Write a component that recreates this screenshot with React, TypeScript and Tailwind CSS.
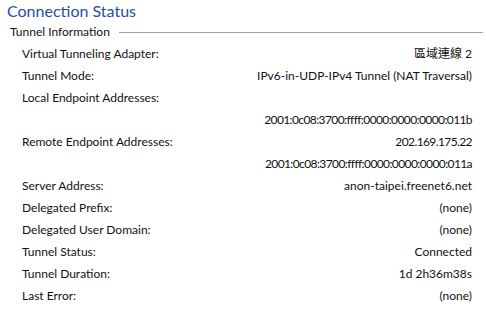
const rows: { label: string; value?: string; tight?: boolean }[] = [
  { label: 'Virtual Tunneling Adapter:', value: '區域連線 2' },
  { label: 'Tunnel Mode:', value: 'IPv6-in-UDP-IPv4 Tunnel (NAT Traversal)' },
  { label: 'Local Endpoint Addresses:' },
  { label: '', value: '2001:0c08:3700:ffff:0000:0000:0000:011b', tight: true },
  { label: 'Remote Endpoint Addresses:', value: '202.169.175.22', tight: true },
  { label: '', value: '2001:0c08:3700:ffff:0000:0000:0000:011a', tight: true },
  { label: 'Server Address:', value: 'anon-taipei.freenet6.net' },
  { label: 'Delegated Prefix:', value: '(none)' },
  { label: 'Delegated User Domain:', value: '(none)' },
  { label: 'Tunnel Status:', value: 'Connected' },
  { label: 'Tunnel Duration:', value: '1d 2h36m38s' },
  { label: 'Last Error:', value: '(none)' },
]

export default function App() {
  return (
    <div
      className="w-[486px] h-[315px] bg-white overflow-hidden text-[12px] text-[#111]"
      style={{ fontFamily: 'Lato, "Noto Sans CJK TC", sans-serif' }}
    >
      <h1 className="h-[21px] pl-[7px] text-[16px] leading-[21px] text-[#1f4fa8]">Connection Status</h1>
      <div className="flex items-center h-[22px] pl-[10px] pr-[3px]">
        <span className="leading-none">Tunnel Information</span>
        <div className="flex-1 ml-[9px] h-px bg-[#a0a0a0]" />
      </div>
      <div className="flex flex-col pl-[22px] pr-[14px]">
        {rows.map((r, i) => (
          <div key={i} className="flex items-center justify-between h-[22px] leading-none">
            <span>{r.label}</span>
            <span className={r.tight ? 'tracking-[-0.6px]' : ''}>{r.value}</span>
          </div>
        ))}
      </div>
    </div>
  )
}
